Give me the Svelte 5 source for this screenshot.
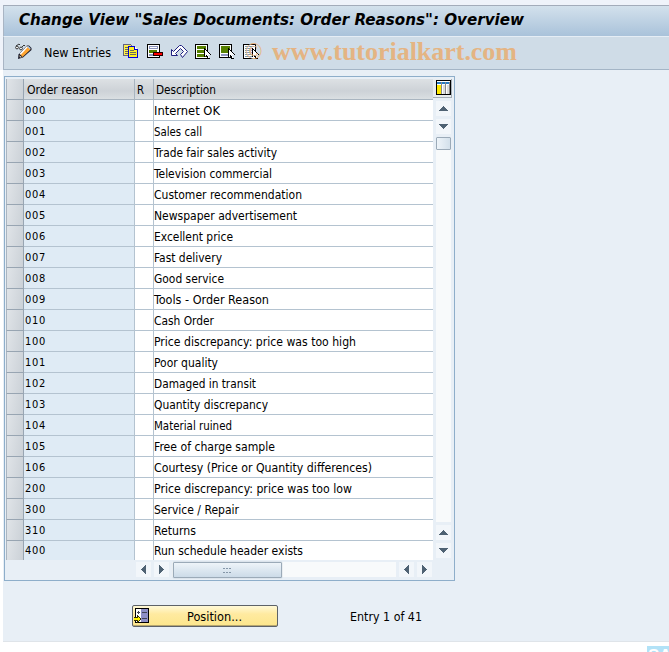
<script>
	const reasons = [
		['000', 'Internet OK', 66],
		['001', 'Sales call', 48],
		['002', 'Trade fair sales activity', 123],
		['003', 'Television commercial', 118],
		['004', 'Customer recommendation', 148],
		['005', 'Newspaper advertisement', 143],
		['006', 'Excellent price', 79],
		['007', 'Fast delivery', 68],
		['008', 'Good service', 70],
		['009', 'Tools - Order Reason', 115],
		['010', 'Cash Order', 60],
		['100', 'Price discrepancy: price was too high', 202],
		['101', 'Poor quality', 64],
		['102', 'Damaged in transit', 102],
		['103', 'Quantity discrepancy', 114],
		['104', 'Material ruined', 78],
		['105', 'Free of charge sample', 121],
		['106', 'Courtesy (Price or Quantity differences)', 218],
		['200', 'Price discrepancy: price was too low', 198],
		['300', 'Service / Repair', 85],
		['310', 'Returns', 42],
		['400', 'Run schedule header exists', 149]
	];

	const arrows = {
		up: 'M4 0h1v1h1v1h1v1h1v1h1v1h-9v-1h1v-1h1v-1h1v-1h1z',
		down: 'M0 0h9v1h-1v1h-1v1h-1v1h-1v1h-1v-1h-1v-1h-1v-1h-1v-1h-1z',
		left: 'M4 0h1v9h-1v-1h-1v-1h-1v-1h-1v-1h-1v-1h1v-1h1v-1h1v-1h1z',
		right: 'M0 0h1v1h1v1h1v1h1v1h1v1h-1v1h-1v1h-1v1h-1v1h-1z'
	};
</script>

{#snippet label(text, width)}
	<svg class="label" {width} height="16">
		<text x="0" y="12" textLength={width} lengthAdjust="spacingAndGlyphs">{text}</text>
	</svg>
{/snippet}

{#snippet arrow(dir)}
	<span class="arrow">
		<svg
			width={dir === 'up' || dir === 'down' ? 9 : 5}
			height={dir === 'up' || dir === 'down' ? 5 : 9}
			shape-rendering="crispEdges"
		>
			<path d={arrows[dir]} fill="#4f6273" />
		</svg>
	</span>
{/snippet}

{#snippet cursor()}
	<path d="M9 5h1v1h1v1h1v1h1v1h1v1h1v1h1v1h-3v1h1v2h1v1h-3v-2h-1v-1h-1v1h-1z" />
	<path d="M10 7h1v1h1v1h1v1h1v1h1v1h-2v1h1v2h-1v-2h-1v-1h-1v1h-1z" fill="#fff" />
{/snippet}

<div class="screen">
	<header>
		<h1>
			<svg width="530" height="28">
				<text x="0" y="17" textLength="505" lengthAdjust="spacingAndGlyphs">Change View "Sales Documents: Order Reasons": Overview</text>
			</svg>
		</h1>
	</header>

	<nav>
		<svg class="icon edit" width="17" height="16" viewBox="0 0 17 16">
			<circle cx="2" cy="4.500" r="1.400" fill="#fff" stroke="#222" stroke-width=".9" />
			<circle cx="6" cy="5.500" r="1.400" fill="#fff" stroke="#222" stroke-width=".9" />
			<path d="M1 3l3-2 1 1M7 4l2-2 1 1" fill="none" stroke="#222" stroke-width=".9" />
			<path d="M3.500 11.500l8.500-9h2l2.500 2.500v2l-8.500 7.500-5 1.500z" fill="#1a1a2a" />
			<path d="M5 11l7-7.500 3.500 3-8 7.500z" fill="#ffa530" />
			<path d="M5.200 11.200l7-7.500" stroke="#fff" stroke-width="1.600" />
			<path d="M12 3.500l1-.7 2.700 2.500-.7 1.200z" fill="#b9cfe8" />
			<path d="M4.300 12.200l2.700 2-2 .4z" fill="#ffe3b0" />
		</svg>
		<span class="new">{@render label('New Entries', 67)}</span>
		<svg class="icon" width="16" height="16" viewBox="0 0 16 16" shape-rendering="crispEdges">
			<path d="M.5 1.500h7l2 2v9h-9z" fill="#fff04b" stroke="#646480" />
			<path d="M2 4h4M2 6h4M2 8h4M2 10h4" stroke="#69695c" />
			<path d="M5.500 3.500h6l3 3v8h-9z" fill="#ffef23" stroke="#0000d8" />
			<path d="M11.500 3.500v3h3" fill="#fff" stroke="#0000d8" />
			<path d="M7 7.500h4M7 9.500h6M7 11.500h6" stroke="#69695c" />
		</svg>
		<svg class="icon" width="17" height="16" viewBox="0 0 17 16" shape-rendering="crispEdges">
			<path d="M.5 1.500h12v13h-12z" fill="#fff" stroke="#000" />
			<path d="M2.500 3.500h8v2h-8zM2.500 11.500h8v1h-8z" fill="#fff" stroke="#8b93bd" />
			<path d="M2 7h8v3H2z" fill="#568000" />
			<path d="M6 9h10v4H6z" fill="#200" />
			<path d="M7 10h8v2H7z" fill="#f00" />
		</svg>
		<svg class="icon" width="17" height="16" viewBox="0 0 17 16">
			<path
				d="M.5 6.500v6h6l-2-2 5-5 3 3-3 3 2 3 5-6-6-6h-2l-6 6z"
				fill="#fff"
				stroke="#202080"
			/>
		</svg>
		<svg class="icon" width="17" height="17" viewBox="0 0 17 17" shape-rendering="crispEdges">
			<path d="M.5 1.500h12v14h-12z" fill="#fff" stroke="#000" />
			<path d="M2 3h9v3H2zM2 7h9v3H2zM2 11h9v3H2z" fill="#568000" />
			{@render cursor()}
		</svg>
		<svg class="icon" width="17" height="17" viewBox="0 0 17 17" shape-rendering="crispEdges">
			<path d="M.5 1.500h12v13h-12z" fill="#fff" stroke="#000" />
			<path d="M2 3h9v7H2z" fill="#568000" />
			<path d="M2.500 11.500h7v1h-7z" fill="#fff" stroke="#8b93bd" />
			{@render cursor()}
		</svg>
		<svg class="icon" width="17" height="17" viewBox="0 0 17 17" shape-rendering="crispEdges">
			<path d="M.5 1.500h12v14h-12z" fill="#fff" stroke="#000" />
			<path d="M2 3.500h9M2 5.500h8M2 7.500h7M2 9.500h7M2 11.500h7M2 13.500h7" stroke="#7d9ab3" />
			{@render cursor()}
		</svg>
		<svg class="watermark" width="274" height="30">
			<text class="copy" x="0" y="21">©</text>
			<text x="27" y="22" textLength="245">www.tutorialkart.com</text>
		</svg>
	</nav>

	<main>
		<section class="table">
			<div class="upper">
				<div class="grid">
					<div class="row head">
						<div class="sel"></div>
						<div class="code">{@render label('Order reason', 71)}</div>
						<div class="r">{@render label('R', 7)}</div>
						<div class="desc">{@render label('Description', 60)}</div>
					</div>
					{#each reasons as [code, text, width]}
						<div class="row">
							<div class="sel"></div>
							<div class="code num">{code}</div>
							<div class="r"></div>
							<div class="desc">{@render label(text, width)}</div>
						</div>
					{/each}
				</div>
				<div class="vscroll">
					<div class="config">
						<svg width="16" height="16" shape-rendering="crispEdges">
							<path d="M0 0h15v15H0z" />
							<path d="M1 1h13v13H1z" fill="#fff" />
							<path d="M1 2h13v2H1z" fill="#267bc5" />
							<path d="M1 5h4v9H1z" fill="#ffe900" />
							<path d="M7 5h2v9H7zM11 5h2v9h-2z" fill="#ddd" />
							<path d="M5.500 2v12M9.500 2v12M13.500 2v12" stroke="#888" />
						</svg>
					</div>
					{@render arrow('up')}
					{@render arrow('down')}
					<div class="track"><div class="thumb"></div></div>
					{@render arrow('up')}
					{@render arrow('down')}
				</div>
			</div>
			<div class="hscroll">
				{@render arrow('left')}
				{@render arrow('right')}
				<div class="track">
					<div class="thumb">
						<svg width="9" height="5" shape-rendering="crispEdges">
							<path d="M0 .5h9M0 4.500h9" stroke="#8496a8" stroke-width="1" stroke-dasharray="2 1" />
						</svg>
					</div>
				</div>
				{@render arrow('left')}
				{@render arrow('right')}
			</div>
		</section>

		<footer>
			<button>
				<svg class="pos" width="15" height="15" shape-rendering="crispEdges">
					<path d="M1.500 .5h13v14h-13z" fill="#fff" stroke="#000" />
					<path d="M7 1h7v13H7z" fill="#8e8fc6" />
					<path d="M3 4.500h3M4.500 3v3M8 4.500h5M8 10.500h5" stroke="#445" />
					<path d="M0 9h3V7h1v1h1v1h1v1h1v2h-1v1h-1v1h-1v1h-1v-2H0z" fill="#332e00" />
					<path d="M0 10h4v-1h1v1h1v2h-1v1h-1v-1H0z" fill="#fff100" />
				</svg>
				<span>{@render label('Position...', 55)}</span>
			</button>
			<div class="entry">{@render label('Entry 1 of 41', 72)}</div>
		</footer>
	</main>
	<div class="logo">
		<svg width="22" height="6"><text x="1" y="15">SAP</text></svg>
	</div>
</div>

<style>
	:global(body) {
		overflow: hidden;
		background: #fff;
	}
	.screen {
		position: relative;
		box-sizing: border-box;
		width: 669px;
		height: 652px;
		padding: 5px 0 0 3px;
		overflow: hidden;
		background: linear-gradient(#eff3fa 70px, #fff 70px);
		font-family: 'DejaVu Sans Condensed', 'DejaVu Sans', sans-serif;
		font-stretch: condensed;
		font-size: 12px;
		color: #000;
	}
	svg {
		display: block;
		flex: none;
	}
	.label {
		overflow: visible;
		font-size: 11.5px;
	}
	header {
		box-sizing: border-box;
		height: 32px;
		border-top: 1px solid #a3acba;
		border-left: 1px solid #a9b5c4;
		border-bottom: 1px solid #e5edf5;
		background: linear-gradient(#d3e1ec, #a9c2da);
	}
	h1 {
		margin: 0;
		padding: 2px 0 0 15px;
		font-family: 'DejaVu Sans', sans-serif;
		font-size: 16px;
		font-weight: bold;
		font-style: italic;
		font-stretch: normal;
	}
	h1 svg {
		overflow: visible;
	}
	nav {
		display: flex;
		align-items: flex-start;
		box-sizing: border-box;
		height: 33px;
		padding: 6px 0 0 11px;
		border-left: 1px solid #a9b5c4;
		border-bottom: 1px solid #a4b5c6;
		background: #cfdce7;
	}
	.new {
		margin: 2px 12px 0 12px;
	}
	.icon + .icon {
		margin-left: 8px;
	}
	.icon:nth-of-type(n + 4) {
		margin-left: 7px;
	}
	.watermark {
		margin: -5px 0 0 -15px;
		font-family: 'Liberation Serif', serif;
		font-size: 26px;
		font-weight: bold;
		font-stretch: normal;
		fill: #e4b483;
	}
	.watermark .copy {
		font-size: 23px;
		font-weight: normal;
	}
	main {
		box-sizing: border-box;
		height: 572px;
		padding: 6px 0 0 1px;
		border-bottom: 1px solid #dfe4e9;
		background: #e8eff6;
	}
	.table {
		box-sizing: border-box;
		width: 451px;
		height: 505px;
		padding: 2px 1px 0;
		border: 1px solid #8eaeca;
	}
	.upper {
		display: flex;
		height: 481px;
	}
	.grid {
		width: 427px;
		height: 481px;
		overflow: hidden;
	}
	.row {
		display: flex;
		height: 21px;
	}
	.row > div {
		box-sizing: border-box;
		flex: none;
		border-bottom: 1px solid #b4c3d0;
		border-right: 1px solid #b4c3d0;
		padding-top: 3px;
	}
	.row:last-child {
		height: 19px;
	}
	.row:last-child > div {
		border-bottom: 0;
		padding-top: 2px;
	}
	.row .sel {
		width: 18px;
		border-color: #98a5b2;
		border-left: 1px solid #aab5c0;
		background: linear-gradient(100deg, #e0e4e8, #cbd1d7);
	}
	.code {
		width: 111px;
		padding-left: 1px;
		background: #dfebf5;
	}
	.num {
		font-size: 11px;
		line-height: 16px;
		letter-spacing: 0.75px;
	}
	.r {
		width: 19px;
		background: #fff;
	}
	.desc {
		width: 280px;
		background: #fff;
	}
	.row > .desc {
		border-right: 0;
	}
	.head > div {
		background: linear-gradient(#dde1e4, #cdd2d7 60%, #dadfe2);
		border-color: #a9b5c0;
	}
	.head .code {
		padding-left: 3px;
	}
	.head .r,
	.head .desc {
		padding-left: 2px;
	}
	.vscroll {
		display: flex;
		flex-direction: column;
		box-sizing: border-box;
		align-items: flex-start;
		width: 20px;
		height: 479px;
		padding-left: 3px;
		gap: 3px;
	}
	.config {
		box-sizing: border-box;
		width: 19px;
		height: 19px;
		margin-left: -3px;
		padding: 1px 0 0 3px;
		border-right: 1px solid #a3adb5;
		border-bottom: 1px solid #a3adb5;
		background: #e8ecef;
	}
	.arrow {
		display: flex;
		flex: none;
		align-items: center;
		justify-content: center;
		width: 15px;
		height: 15px;
		background: #f2f6fa;
	}
	.track {
		flex: 1;
		background: #f8fafb;
	}
	.thumb {
		display: flex;
		align-items: center;
		justify-content: center;
		box-sizing: border-box;
		border: 1px solid #9baab8;
		border-radius: 1px;
	}
	.vscroll .thumb {
		width: 15px;
		height: 13px;
		background: linear-gradient(90deg, #eef4f9, #d3e0eb);
	}
	.hscroll {
		display: flex;
		gap: 3px;
		width: 296px;
		height: 15px;
		margin: 2px 0 0 130px;
	}
	.hscroll .thumb {
		width: 109px;
		height: 16px;
		margin-left: 1px;
		background: linear-gradient(#eef4f9, #ccdbe8);
		box-shadow: 0 0 1px #75879a;
	}
	footer {
		display: flex;
		padding: 24px 0 0 128px;
	}
	button {
		display: flex;
		box-sizing: border-box;
		width: 146px;
		height: 22px;
		padding: 2px 1px;
		border: 1px solid #5d6268;
		border-radius: 2px;
		background: linear-gradient(#fff9d7, #ffeaa0 40%, #fce68c);
		box-shadow: inset 0 -1px #b6a66f;
		font: inherit;
	}
	button span {
		margin: 1px 0 0 38px;
	}
	.entry {
		margin: 4px 0 0 72px;
	}
	.logo {
		position: absolute;
		left: 647px;
		top: 646px;
		width: 22px;
		height: 6px;
		background: #b2e2f7;
		font: bold 17px 'Liberation Sans', sans-serif;
		fill: #fff;
	}
</style>
